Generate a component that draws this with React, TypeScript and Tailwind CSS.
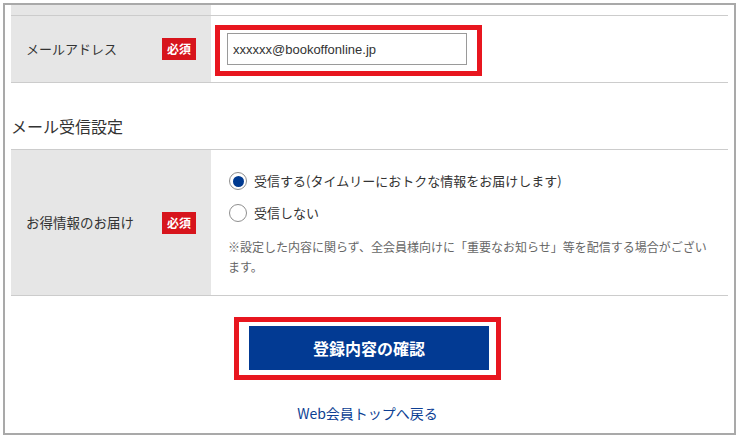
import React from "react";

const Badge = () => (
  <span className="flex h-[22px] w-[34px] items-center justify-center bg-[#d7141c] text-[12px] font-bold leading-none text-white">
    必須
  </span>
);

const Radio = ({ checked, label }: { checked?: boolean; label: string }) => (
  <label className="flex h-[24px] items-center">
    <span className="ml-[1px] flex h-[18px] w-[18px] items-center justify-center rounded-full border border-[#8f8f8f] bg-white">
      {checked && <span className="h-[11px] w-[11px] rounded-full bg-[#003a90]" />}
    </span>
    <span className="ml-[7px] text-[13px] text-[#333]">{label}</span>
  </label>
);

export default function App() {
  return (
    <div
      className="h-[438px] w-[739px] bg-white p-[3px]"
      style={{ fontFamily: '"Noto Sans CJK JP", "Noto Sans", sans-serif' }}
    >
      <div className="h-[432px] overflow-hidden border-2 border-[#a9a9a9] px-[6px]">
        {/* previous row (cut off) */}
        <div className="flex h-[11px] border-b border-[#cccccc]">
          <div className="w-[200px] bg-[#e6e6e6]" />
        </div>

        {/* email row */}
        <div className="flex border-b border-[#cccccc]">
          <div className="flex w-[200px] items-center justify-between bg-[#e6e6e6] pl-[15px] pr-[15px]">
            <span className="text-[13px] text-[#333]">メールアドレス</span>
            <Badge />
          </div>
          <div className="pb-[6px] pl-[4px] pt-[9px]">
            <div className="border-[5px] border-[#e8161f] pb-[6px] pl-[7px] pr-[10px] pt-[3px]">
              <input
                type="text"
                defaultValue="xxxxxx@bookoffonline.jp"
                className="h-[32px] w-[240px] border border-[#9a9a9a] bg-white pl-[5px] text-[13px] text-[#333] outline-none"
                style={{ fontFamily: '"Liberation Sans", Arial, sans-serif' }}
              />
            </div>
          </div>
        </div>

        <h2 className="pb-[11px] pt-[31px] text-[16px] font-normal leading-[24px] text-[#333]">
          メール受信設定
        </h2>

        {/* mail setting row */}
        <div className="flex border-y border-[#cccccc]">
          <div className="flex w-[200px] items-center justify-between bg-[#e6e6e6] pl-[15px] pr-[15px]">
            <span className="text-[13.5px] text-[#333]">お得情報のお届け</span>
            <Badge />
          </div>
          <div className="flex-1 pb-[18px] pl-[17px] pr-[12px] pt-[19px]">
            <Radio checked label="受信する(タイムリーにおトクな情報をお届けします)" />
            <div className="mt-[8px]">
              <Radio label="受信しない" />
            </div>
            <p className="mt-[12px] text-[12px] leading-[20px] text-[#666]">
              ※設定した内容に関らず、全会員様向けに「重要なお知らせ」等を配信する場合がございます。
            </p>
          </div>
        </div>

        <div className="flex flex-col items-center pr-[4px]">
          <div className="mt-[21px] border-[5px] border-[#e8161f] pb-[5px] pl-[10px] pr-[7px] pt-[4px]">
            <button className="flex h-[44px] w-[240px] items-center justify-center bg-[#023a93] text-[16px] font-bold text-white">
              登録内容の確認
            </button>
          </div>
          <a href="#" className="mt-[23px] text-[14px] leading-[20px] text-[#0d3f94]">
            Web会員トップへ戻る
          </a>
        </div>
      </div>
    </div>
  );
}
